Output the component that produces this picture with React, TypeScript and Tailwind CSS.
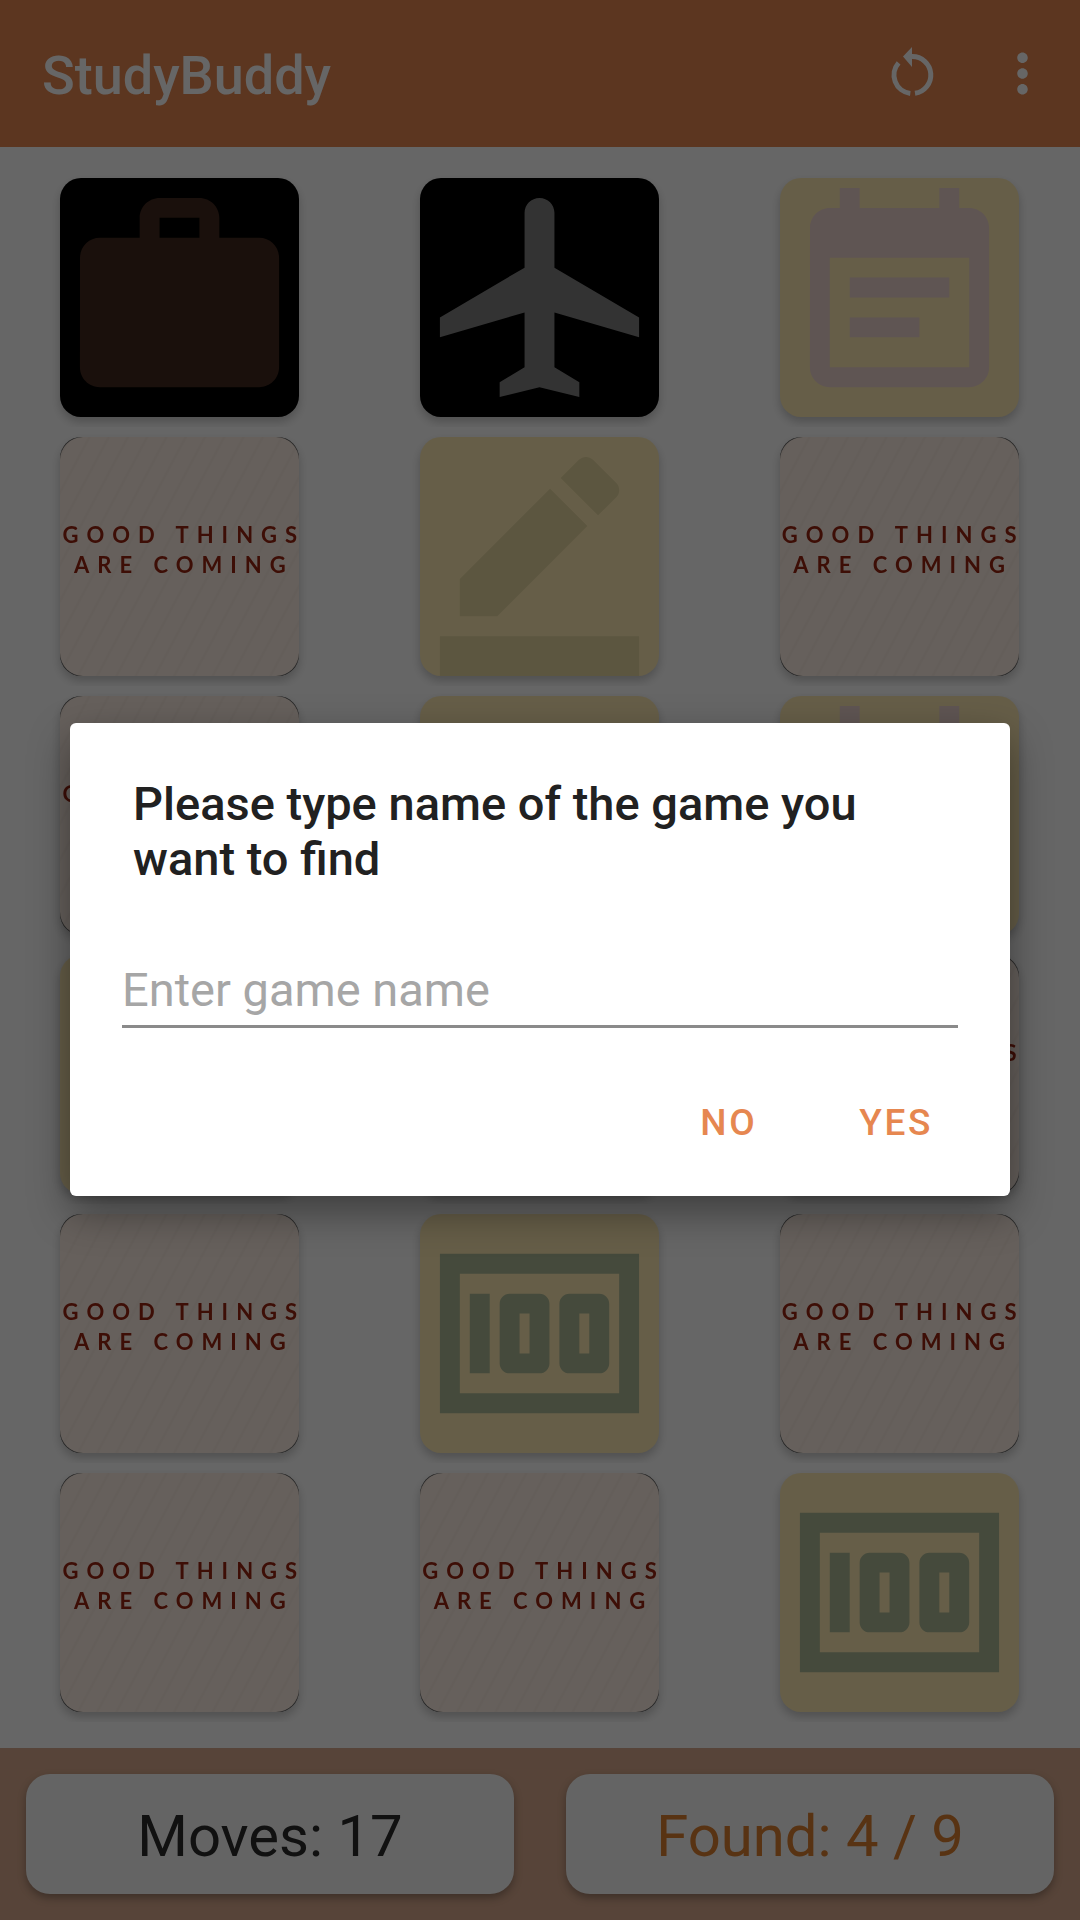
const roboto = "font-['Roboto',sans-serif]";

function MaterialIcon({ d, color }: { d: string; color: string }) {
  return (
    <svg viewBox="0 0 24 24" className="w-full h-full block" fill={color}>
      <path d={d} />
    </svg>
  );
}

const work = 'M20 6h-4V4c0-1.11-.89-2-2-2h-4c-1.11 0-2 .89-2 2v2H4c-1.11 0-1.99.89-1.99 2L2 19c0 1.11.89 2 2 2h16c1.11 0 2-.89 2-2V8c0-1.11-.89-2-2-2zm-6 0h-4V4h4v2z';
const flight = 'M22 16v-2l-8.5-5V3.5c0-.83-.67-1.5-1.5-1.5s-1.5.67-1.5 1.5V9L2 14v2l8.5-2.5V19L8 20.5V22l4-1 4 1v-1.5L13.5 19v-5.5L22 16z';
const eventNote = 'M17 10H7v2h10v-2zm2-7h-1V1h-2v2H8V1H6v2H5c-1.11 0-1.99.9-1.99 2L3 19c0 1.1.89 2 2 2h14c1.1 0 2-.9 2-2V5c0-1.1-.9-2-2-2zm0 16H5V8h14v11zm-5-5H7v2h7v-2z';
const borderColor = 'M22 24H2v-4h20v4zM13.06 5.19l3.75 3.75L7.75 18H4v-3.75l9.06-9.06zm4.82 2.68-3.75-3.75 1.83-1.83c.39-.39 1.02-.39 1.41 0l2.34 2.34c.39.39.39 1.02 0 1.41l-1.83 1.83z';
const money = 'M5 8h2v8H5zm7 0H9c-.55 0-1 .45-1 1v6c0 .55.45 1 1 1h3c.55 0 1-.45 1-1V9c0-.55-.45-1-1-1zm-1 6h-1v-4h1v4zm7-6h-3c-.55 0-1 .45-1 1v6c0 .55.45 1 1 1h3c.55 0 1-.45 1-1V9c0-.55-.45-1-1-1zm-1 6h-1v-4h1v4zM2 4v16h20V4H2zm2 14V6h16v12H4z';

function IconCard({ d, color, dark }: { d: string; color: string; dark?: boolean }) {
  return (
    <div className={`w-[239px] h-[239px] rounded-[21px] overflow-hidden shadow-[0_5px_10px_rgba(0,0,0,0.22)] ${dark ? 'bg-black' : 'bg-[#ffebb4]'}`}>
      <MaterialIcon d={d} color={color} />
    </div>
  );
}

function CardBack() {
  return (
    <div className="w-[239px] h-[239px] rounded-[21px] bg-[#555] shadow-[0_5px_10px_rgba(0,0,0,0.22)]">
      <div className="w-full h-full rounded-[23px] overflow-hidden bg-[#fef0e6] bg-[repeating-linear-gradient(118deg,transparent_0px,transparent_7px,rgba(190,150,130,0.07)_9px,transparent_11px,transparent_17px)] flex flex-col items-center pt-[83px]">
        <div className="font-['Lato',sans-serif] font-bold text-[#9a2410] text-[22px] leading-[30px] tracking-[8px] -mr-[8px] whitespace-nowrap blur-[0.6px]">GOOD THINGS</div>
        <div className="font-['Lato',sans-serif] font-bold text-[#9a2410] text-[22px] leading-[30px] tracking-[8px] -mr-[8px] whitespace-nowrap blur-[0.6px]">ARE COMING</div>
      </div>
    </div>
  );
}

const cards = [
  <IconCard d={work} color="#41281e" dark />,
  <IconCard d={flight} color="#808080" dark />,
  <IconCard d={eventNote} color="#eed4cf" />,
  <CardBack />,
  <IconCard d={borderColor} color="#e6d7a0" />,
  <CardBack />,
  <CardBack />,
  <IconCard d={money} color="#acb996" />,
  <IconCard d={eventNote} color="#eed4cf" />,
  <IconCard d={work} color="#e6d7a0" />,
  <CardBack />,
  <CardBack />,
  <CardBack />,
  <IconCard d={money} color="#acb996" />,
  <CardBack />,
  <CardBack />,
  <CardBack />,
  <IconCard d={money} color="#acb996" />,
];

export default function App() {
  return (
    <div className={`relative w-[1080px] h-[1920px] overflow-hidden bg-white flex flex-col ${roboto}`}>
      <header className="h-[147px] shrink-0 bg-[#e68750] flex items-center pl-[42px] pr-[26px]">
        <h1 className="text-white text-[54px] font-medium flex-1 pt-[4px]">StudyBuddy</h1>
        <svg viewBox="880 42 63 63" className="w-[63px] h-[63px] mr-[47px]" fill="none" stroke="#fff" strokeWidth="5">
          <path d="M909.3 93.4A18.5 18.5 0 0 1 897.6 62.8" />
          <path d="M911 56.5A18.5 18.5 0 0 1 914 93.3" />
          <path d="M902 56.5L911 47V67Z" fill="#fff" stroke="none" />
        </svg>
        <svg viewBox="0 0 24 24" className="w-[63px] h-[63px]" fill="#fff">
          <path d="M12 8c1.1 0 2-.9 2-2s-.9-2-2-2-2 .9-2 2 .9 2 2 2zm0 2c-1.1 0-2 .9-2 2s.9 2 2 2 2-.9 2-2-.9-2-2-2zm0 6c-1.1 0-2 .9-2 2s.9 2 2 2 2-.9 2-2-.9-2-2-2z" />
        </svg>
      </header>

      <main className="flex-1 grid grid-cols-3 content-start pt-[21px] pr-[1px]">
        {cards.map((card, i) => (
          <div key={i} className="flex justify-center">
            <div className="w-[259px] h-[259px] p-[10px] overflow-hidden">{card}</div>
          </div>
        ))}
      </main>

      <footer className="h-[172px] shrink-0 bg-[#d9aa8e] flex gap-[52px] px-[26px] pt-[26px]">
        <div className="flex-1 h-[120px] rounded-[24px] bg-[#fafafa] shadow-[0_4px_8px_rgba(0,0,0,0.3)] flex items-center justify-center pt-[4px] text-[58px] text-[#2b2b2b]">Moves: 17</div>
        <div className="flex-1 h-[120px] rounded-[24px] bg-[#fafafa] shadow-[0_4px_8px_rgba(0,0,0,0.3)] flex items-center justify-center pt-[4px] text-[58px] text-[#dc7f30]">Found: 4 / 9</div>
      </footer>

      {/* dim layer + dialog */}
      <div className="absolute inset-0 bg-black/60 flex items-start justify-center">
        <div className="mt-[723px] w-[940px] h-[473px] bg-white rounded-[6px] shadow-[0_16px_40px_rgba(0,0,0,0.4)] flex flex-col">
          <h2 className="mt-[53px] ml-[63px] w-[800px] text-[#212121] text-[47px] leading-[55px] font-medium">Please type name of the game you want to find</h2>
          <div className="mt-[70px] mx-[52px] h-[72px] border-b-[3px] border-[#8a8a8a] flex items-center text-[47px] text-[#a6a6a6]">Enter game name</div>
          <div className="mt-[73px] flex justify-end pr-[77px] gap-[102px] text-[#e68750] text-[37px] leading-[44px] font-medium tracking-[2.6px]">
            <span>NO</span>
            <span>YES</span>
          </div>
        </div>
      </div>
    </div>
  );
}
